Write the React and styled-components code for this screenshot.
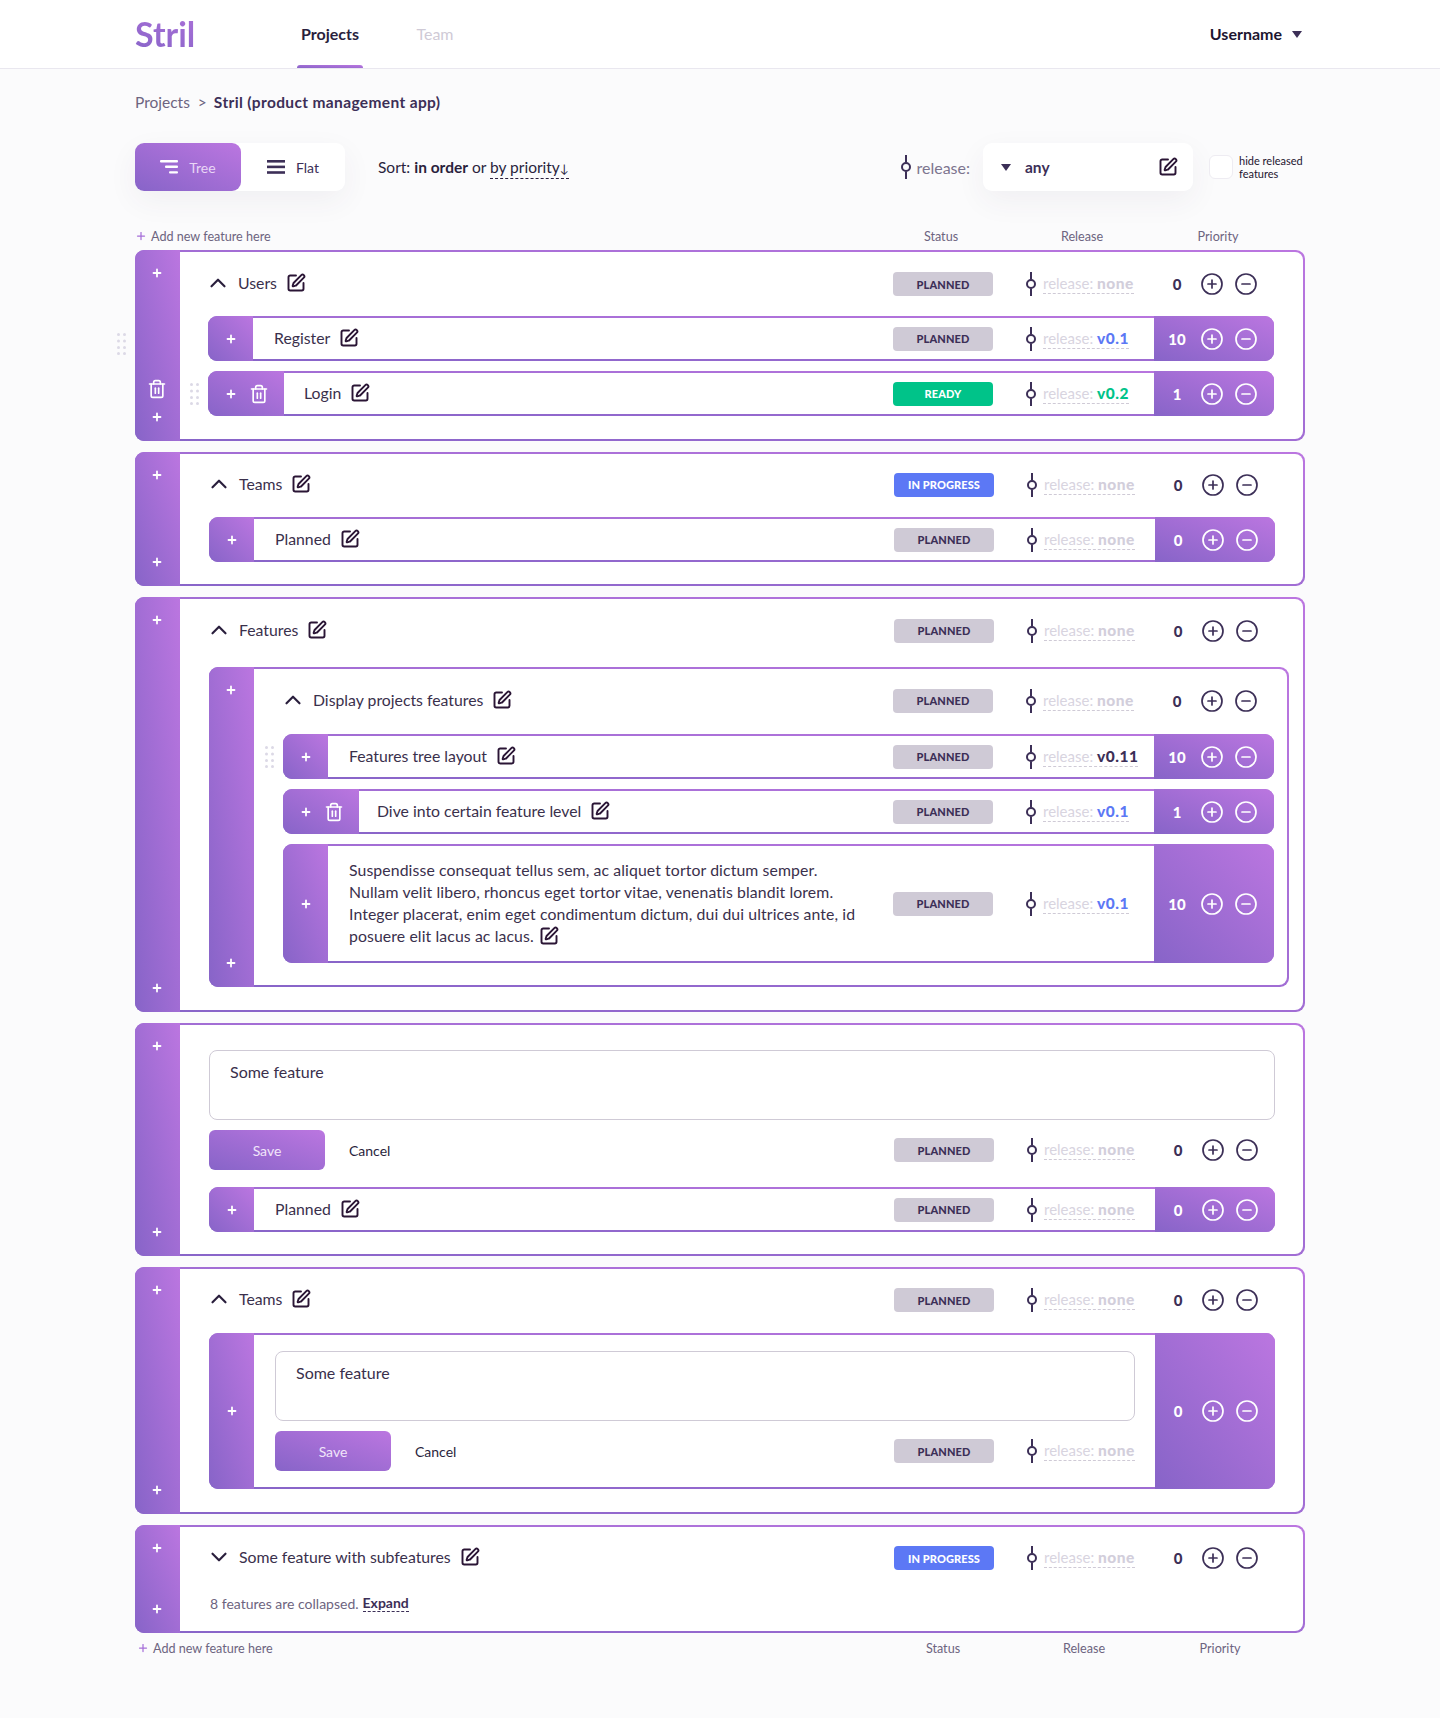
import React from 'react';
import styled, { createGlobalStyle } from 'styled-components';
import { ChevronDown, ChevronUp, CirclePlus, CircleMinus, Plus, SquarePen, Trash2 } from 'lucide-react';

const Global = createGlobalStyle`
  * { box-sizing: border-box; }
  body {
    margin: 0;
    background: #fbfbfc;
    font-family: Lato, "Open Sans", sans-serif;
    color: #2a1f3d;
  }
`;

const grad = 'linear-gradient(to top right, #8764c8 0%, #bb76e0 100%)';
const ink = '#3c2f57';

const TopBar = styled.header`
  height: 69px;
  background: #fff;
  border-bottom: 1px solid #e9e7ef;
`;
const TopInner = styled.div`
  width: 1170px;
  height: 68px;
  margin: 0 auto;
  display: flex;
  align-items: center;
`;
const Logo = styled.div`
  width: 162px;
  margin-top: -2px;
  font-size: 34px;
  font-weight: 700;
  background: ${grad};
  -webkit-background-clip: text;
  background-clip: text;
  color: transparent;
`;
const Tab = styled.a`
  position: relative;
  align-self: stretch;
  display: flex;
  align-items: center;
  justify-content: center;
  width: 66px;
  margin-right: 39px;
  padding-bottom: 2px;
  font-size: 16px;
  font-weight: ${p => (p.$active ? 700 : 400)};
  color: ${p => (p.$active ? '#2a1f3d' : '#cfcad6')};
  &::after {
    content: '';
    display: ${p => (p.$active ? 'block' : 'none')};
    position: absolute;
    left: 0;
    right: 0;
    bottom: 0;
    height: 3px;
    border-radius: 3px 3px 0 0;
    background: ${grad};
  }
`;
const User = styled.div`
  margin-left: auto;
  margin-right: 3px;
  display: flex;
  align-items: center;
  gap: 10px;
  font-size: 16px;
  font-weight: 700;
  color: #1d1530;
`;
const UserName = styled.span`
  margin: -2px 0 0 -2px;
`;
const Caret = styled.i`
  display: block;
  width: 0;
  height: 0;
  border-left: 5.5px solid transparent;
  border-right: 5.5px solid transparent;
  border-top: 7px solid ${ink};
`;

const Page = styled.main`
  width: 1170px;
  margin: 0 auto;
  padding-bottom: 58px;
`;
const Crumbs = styled.div`
  height: 68px;
  padding-top: 22px;
  font-size: 15.5px;
  line-height: 22px;
  color: #6d6480;
  b { color: ${ink}; font-weight: 700; letter-spacing: 0.36px; }
  span { margin: 0 7px 0 8px; }
`;
const Toolbar = styled.div`
  height: 48px;
  margin-top: 6px;
  display: flex;
  align-items: center;
`;
const Toggle = styled.div`
  display: flex;
  width: 210px;
  height: 48px;
  background: #fff;
  border-radius: 9px;
  box-shadow: 0 10px 30px rgba(60, 47, 87, 0.06);
`;
const ToggleBtn = styled.button`
  flex: ${p => (p.$on ? '0 0 106px' : '1')};
  border: 0;
  border-radius: 9px;
  background: ${p => (p.$on ? grad : 'transparent')};
  color: ${p => (p.$on ? '#e9d6f6' : ink)};
  font: inherit;
  font-size: 14px;
  display: flex;
  align-items: center;
  justify-content: center;
  gap: 11px;
  padding: 0;
`;
const Sort = styled.div`
  margin-left: 33px;
  font-size: 15.5px;
  b { font-weight: 700; }
  u {
    text-decoration: none;
    border-bottom: 1px dashed #2a1f3d;
    padding-bottom: 2px;
  }
  em { font-style: normal; font-size: 12px; }
`;
const Filter = styled.div`
  margin-left: auto;
  display: flex;
  align-items: center;
`;
const FilterLabel = styled.span`
  margin: 0 13px 0 5px;
  font-size: 16px;
  color: #7d758f;
`;
const Select = styled.div`
  width: 210px;
  height: 48px;
  padding: 0 15px 0 18px;
  display: flex;
  align-items: center;
  background: #fff;
  border-radius: 9px;
  box-shadow: 0 10px 30px rgba(60, 47, 87, 0.06);
  font-size: 15.5px;
  font-weight: 700;
  color: ${ink};
  span { margin-left: 14px; flex: 1; }
`;
const Check = styled.div`
  width: 24px;
  height: 24px;
  margin: 0 6px 0 16px;
  background: #fff;
  border: 1px solid #eeecf2;
  border-radius: 6px;
`;
const CheckText = styled.div`
  width: 66px;
  font-size: 11px;
  line-height: 13px;
  white-space: nowrap;
  color: #1d1530;
`;

const Columns = styled.div`
  height: 24px;
  margin: ${p => p.$top}px 0 ${p => p.$bottom}px;
  padding-left: ${p => p.$shift || 0}px;
  display: flex;
  align-items: center;
  font-size: 12.6px;
  color: #6d6480;
  svg { color: #a66fd8; margin-right: 4px; }
`;
const AddNew = styled.div`
  flex: 1;
  display: flex;
  align-items: center;
`;
const Col = styled.div`
  width: ${p => p.$w}px;
  text-align: center;
`;
const ColEnd = styled.div`
  width: ${p => 42 - (p.$shift || 0)}px;
`;

const Stack = styled.div`
  display: flex;
  flex-direction: column;
  gap: 11px;
`;
const Group = styled.section`
  position: relative;
  display: flex;
  padding: 2px 2px 2px 0;
  margin-right: ${p => (p.$nested ? -14 : 0)}px;
  background: ${grad};
  border-radius: 9px;
`;
const GroupRail = styled.div`
  flex: 0 0 45px;
  margin: -2px 0;
  padding: 17px 1px 18px 0;
  display: flex;
  flex-direction: column;
  align-items: center;
  justify-content: space-between;
  background: ${grad};
  border-radius: 9px 0 0 9px;
  color: #fff;
`;
const RailBottom = styled.div`
  display: flex;
  flex-direction: column;
  align-items: center;
  gap: 12px;
`;
const GroupBody = styled.div`
  flex: 1;
  min-width: 0;
  padding: ${p => p.$top || 0}px ${p => p.$right ?? 28}px ${p => p.$bottom ?? 22}px ${p => p.$left ?? 29}px;
  background: #fff;
  border-radius: 0 8px 8px 0;
`;
const HeadLine = styled.div`
  display: flex;
  align-items: center;
  height: ${p => p.$h}px;
  padding-bottom: ${p => p.$pad || 0}px;
`;
const Title = styled.div`
  flex: 1;
  min-width: 0;
  display: flex;
  align-items: center;
  padding-left: ${p => p.$left || 0}px;
  padding-bottom: 2px;
  font-size: 15.8px;
  color: #3a304c;
  svg { flex: none; }
`;
const TitleText = styled.span`
  margin-right: 9px;
  line-height: 22px;
`;
const LongText = styled.span`
  line-height: 22px;
  letter-spacing: 0.1px;
  svg { vertical-align: -4px; margin-left: 5px; }
`;
const Chevron = styled.span`
  display: flex;
  margin: 0 7px 0 -3px;
  color: #2a1f3d;
`;
const Rows = styled.div`
  display: flex;
  flex-direction: column;
  gap: 10px;
`;
const Row = styled.div`
  position: relative;
  display: flex;
  min-height: ${p => p.$h || 45}px;
  padding: 2px 0;
  background: ${grad};
  border-radius: 9px;
`;
const RowRail = styled.div`
  flex: 0 0 ${p => p.$w || 45}px;
  margin: -2px 0;
  display: flex;
  align-items: center;
  background: ${grad};
  border-radius: 9px 0 0 9px;
  color: #fff;
  svg { flex: none; }
`;
const RailPlus = styled.span`
  display: flex;
  margin: 0 12px 0 17px;
`;
const RowMain = styled.div`
  flex: 1;
  min-width: 0;
  display: flex;
  align-items: center;
  background: #fff;
`;
const Status = styled.div`
  flex: 0 0 100px;
  height: 24px;
  display: flex;
  align-items: center;
  justify-content: center;
  border-radius: 4px;
  font-size: 11px;
  font-weight: 900;
  letter-spacing: 0.1px;
  background: ${p => ({ planned: '#cfcad6', ready: '#00c389', progress: '#5c78f5' }[p.$kind])};
  color: ${p => (p.$kind === 'planned' ? ink : '#fff')};
`;
const Release = styled.div`
  flex: 0 0 161px;
  padding-left: 32px;
  display: flex;
  align-items: center;
  gap: 6px;
`;
const ReleaseText = styled.span`
  border-bottom: 1px dashed #cfcad6;
  font-size: 15px;
  line-height: 19px;
  color: #d8d4df;
  white-space: nowrap;
  b {
    font-size: 15.5px;
    font-weight: 900;
    letter-spacing: 0.5px;
    color: ${p => ({ none: '#d2cedb', blue: '#5c78f5', green: '#00c389', dark: ink }[p.$tone])};
  }
`;
const Score = styled.div`
  flex: 0 0 120px;
  display: flex;
  align-items: center;
  gap: 10px;
  margin: ${p => (p.$filled ? '-2px 0' : 0)};
  color: ${p => (p.$filled ? '#fff' : ink)};
  background: ${p => (p.$filled ? grad : 'transparent')};
  border-radius: 0 9px 9px 0;
  svg { flex: none; }
`;
const ScoreNum = styled.span`
  width: 46px;
  margin-right: -10px;
  text-align: center;
  font-size: 15px;
  font-weight: 900;
  flex: none;
`;
const Grip = styled.svg`
  position: absolute;
  left: -18px;
  top: 50%;
  margin-top: ${p => p.$lift || -11}px;
`;
const Editor = styled.div`
  height: 70px;
  padding: 10px 20px;
  margin-right: ${p => p.$right || 0}px;
  border: 1px solid #cfcad6;
  border-radius: 8px;
  background: #fff;
  font-size: 16px;
  line-height: 22px;
  color: #3a304c;
`;
const FormLine = styled.div`
  display: flex;
  align-items: center;
  margin: 10px 0 ${p => p.$bottom}px;
`;
const Actions = styled.div`
  flex: 1;
  display: flex;
  align-items: center;
`;
const Save = styled.button`
  width: 116px;
  height: 40px;
  border: 0;
  border-radius: 6px;
  background: ${grad};
  color: #f1e5fa;
  font: inherit;
  font-size: 14px;
`;
const Cancel = styled.span`
  margin-left: 24px;
  font-size: 14px;
  color: #2a1f3d;
`;
const FormCol = styled.div`
  flex: 1;
  min-width: 0;
  padding: 16px 0 16px 21px;
  background: #fff;
`;
const Collapsed = styled.div`
  height: 28px;
  padding-left: 1px;
  display: flex;
  align-items: center;
  gap: 4px;
  font-size: 14px;
  color: #6d6480;
  b {
    font-weight: 700;
    color: ${ink};
    border-bottom: 1px dashed ${ink};
  }
`;

const RailAdd = () => <Plus size={12} strokeWidth={3.6} />;
const Edit = () => <SquarePen size={20} strokeWidth={2.3} color="#2a1535" />;
const Bin = () => <Trash2 size={20} strokeWidth={2} color="#fff" />;

const ReleaseMark = () => (
  <svg width="12" height="24" viewBox="0 0 12 24" style={{ flex: 'none' }}>
    <path d="M6 0v7.5M6 16.5V24" stroke={ink} strokeWidth="2" />
    <circle cx="6" cy="12" r="4" fill="none" stroke={ink} strokeWidth="2" />
  </svg>
);

const GripDots = ({ lift }) => (
  <Grip $lift={lift} width="9" height="22" viewBox="0 0 9 22" fill="#dcd9e6">
    {[1.5, 8, 14.5, 20.5].map(y => (
      <React.Fragment key={y}>
        <circle cx="1.5" cy={y} r="1.5" />
        <circle cx="7.5" cy={y} r="1.5" />
      </React.Fragment>
    ))}
  </Grip>
);

const statusText = { planned: 'PLANNED', ready: 'READY', progress: 'IN PROGRESS' };

const Meta = ({ status = 'planned', version = 'none', tone = 'none' }) => (
  <>
    <Status $kind={status}>{statusText[status]}</Status>
    <Release>
      <ReleaseMark />
      <ReleaseText $tone={tone}>release: <b>{version}</b></ReleaseText>
    </Release>
  </>
);

const Points = ({ value, filled }) => (
  <Score $filled={filled}>
    <ScoreNum>{value}</ScoreNum>
    <CirclePlus size={24} strokeWidth={1.7} />
    <CircleMinus size={24} strokeWidth={1.7} />
  </Score>
);

const Head = ({ title, open = true, h = 63, pad, value = 0, ...meta }) => (
  <HeadLine $h={h} $pad={pad}>
    <Title>
      <Chevron>{open ? <ChevronUp size={26} strokeWidth={2} /> : <ChevronDown size={26} strokeWidth={2} />}</Chevron>
      <TitleText>{title}</TitleText>
      <Edit />
    </Title>
    <Meta {...meta} />
    <Points value={value} />
  </HeadLine>
);

const Feature = ({ title, value = 0, trash, left = 21, grip, long, h, ...meta }) => (
  <Row $h={h}>
    {grip && <GripDots />}
    <RowRail $w={trash ? 76 : 45}>
      <RailPlus><RailAdd /></RailPlus>
      {trash && <Bin />}
    </RowRail>
    <RowMain>
      <Title $left={left}>
        {long ? <LongText>{title}<Edit /></LongText> : <><TitleText>{title}</TitleText><Edit /></>}
      </Title>
      <Meta {...meta} />
    </RowMain>
    <Points value={value} filled />
  </Row>
);

const Outer = ({ children, trash, grip }) => (
  <Group>
    {grip && <GripDots lift={-13} />}
    <GroupRail>
      <RailAdd />
      <RailBottom>
        {trash && <Bin />}
        <RailAdd />
      </RailBottom>
    </GroupRail>
    {children}
  </Group>
);

const ColumnRow = ({ top, bottom = 0, shift = 0 }) => (
  <Columns $top={top} $bottom={bottom} $shift={shift}>
    <AddNew><Plus size={12} strokeWidth={2.5} />Add new feature here</AddNew>
    <Col $w={100}>Status</Col>
    <Col $w={182}>Release</Col>
    <Col $w={90}>Priority</Col>
    <ColEnd $shift={shift} />
  </Columns>
);

const App = () => (
  <>
    <Global />
    <TopBar>
      <TopInner>
        <Logo>Stril</Logo>
        <Tab $active>Projects</Tab>
        <Tab>Team</Tab>
        <User><UserName>Username</UserName> <Caret /></User>
      </TopInner>
    </TopBar>
    <Page>
      <Crumbs>Projects<span>&gt;</span><b>Stril (product management app)</b></Crumbs>
      <Toolbar>
        <Toggle>
          <ToggleBtn $on>
            <svg width="18" height="14" viewBox="0 0 18 14" fill="#fff">
              <rect x="0" y="0" width="18" height="2.4" rx="1" />
              <rect x="5" y="5.6" width="13" height="2.4" rx="1" />
              <rect x="9" y="11.2" width="9" height="2.4" rx="1" />
            </svg>
            Tree
          </ToggleBtn>
          <ToggleBtn>
            <svg width="18" height="14" viewBox="0 0 18 14" fill={ink}>
              <rect x="0" y="0" width="18" height="2.6" />
              <rect x="0" y="5.6" width="18" height="2.6" />
              <rect x="0" y="11.2" width="18" height="2.6" />
            </svg>
            Flat
          </ToggleBtn>
        </Toggle>
        <Sort>Sort: <b>in order</b> or <u>by priority<em>↓</em></u></Sort>
        <Filter>
          <ReleaseMark />
          <FilterLabel>release:</FilterLabel>
          <Select>
            <Caret />
            <span>any</span>
            <Edit />
          </Select>
          <Check />
          <CheckText>hide released<br />features</CheckText>
        </Filter>
      </Toolbar>
      <ColumnRow top={33} bottom={2} />
      <Stack>
        <Outer trash grip>
          <GroupBody $left={28} $right={29} $bottom={23}>
            <Head title="Users" h={64} />
            <Rows>
              <Feature title="Register" value={10} version="v0.1" tone="blue" />
              <Feature title="Login" value={1} trash grip status="ready" version="v0.2" tone="green" left={20} />
            </Rows>
          </GroupBody>
        </Outer>
        <Outer>
          <GroupBody>
            <Head title="Teams" status="progress" pad={2} />
            <Feature title="Planned" />
          </GroupBody>
        </Outer>
        <Outer>
          <GroupBody $bottom={23}>
            <Head title="Features" h={68} pad={5} />
            <Group $nested>
              <GroupRail>
                <RailAdd />
                <RailAdd />
              </GroupRail>
              <GroupBody $right={13}>
                <Head title="Display projects features" h={65} pad={2} />
                <Rows>
                  <Feature title="Features tree layout" value={10} grip version="v0.11" tone="dark" />
                  <Feature title="Dive into certain feature level" value={1} trash left={18} version="v0.1" tone="blue" />
                  <Feature
                    long
                    title={<>Suspendisse consequat tellus sem, ac aliquet tortor dictum semper.<br />Nullam velit libero, rhoncus eget tortor vitae, venenatis blandit lorem.<br />Integer placerat, enim eget condimentum dictum, dui dui ultrices ante, id<br />posuere elit lacus ac lacus.</>}
                    value={10}
                    version="v0.1"
                    tone="blue"
                    h={119}
                  />
                </Rows>
              </GroupBody>
            </Group>
          </GroupBody>
        </Outer>
        <Outer>
          <GroupBody $top={25} $bottom={22}>
            <Editor>Some feature</Editor>
            <FormLine $bottom={17}>
              <Actions><Save>Save</Save><Cancel>Cancel</Cancel></Actions>
              <Meta />
              <Points value={0} />
            </FormLine>
            <Feature title="Planned" />
          </GroupBody>
        </Outer>
        <Outer>
          <GroupBody $bottom={23}>
            <Head title="Teams" h={64} pad={2} />
            <Row>
              <RowRail $w={45}><RailPlus><RailAdd /></RailPlus></RowRail>
              <FormCol>
                <Editor $right={20}>Some feature</Editor>
                <FormLine $bottom={0}>
                  <Actions><Save>Save</Save><Cancel>Cancel</Cancel></Actions>
                  <Meta />
                </FormLine>
              </FormCol>
              <Points value={0} filled />
            </Row>
          </GroupBody>
        </Outer>
        <Outer>
          <GroupBody $bottom={14}>
            <Head title="Some feature with subfeatures" open={false} h={62} status="progress" />
            <Collapsed>8 features are collapsed. <b>Expand</b></Collapsed>
          </GroupBody>
        </Outer>
      </Stack>
      <ColumnRow top={3} shift={2} />
    </Page>
  </>
);

export default App;
